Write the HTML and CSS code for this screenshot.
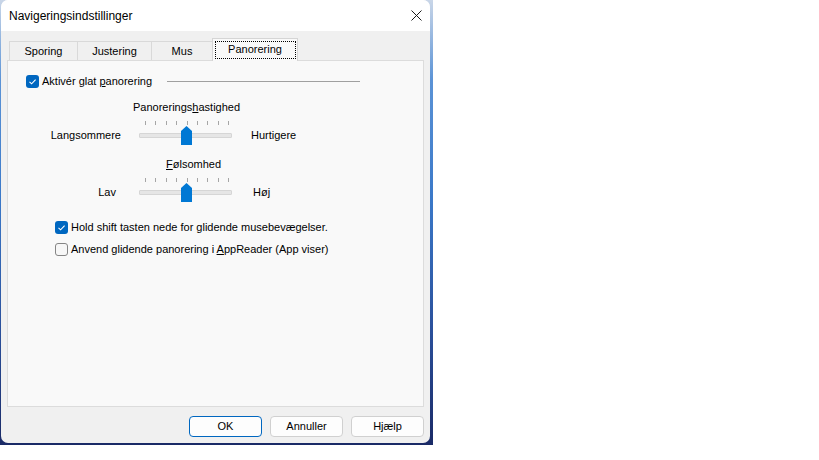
FILE: index.html
```html
<!DOCTYPE html>
<html>
<head>
<meta charset="utf-8">
<link rel="stylesheet" href="styles.css">
</head>
<body>
<div class="desktop">
  <div class="dialog">
    <div class="titlebar">
      <span class="title">Navigeringsindstillinger</span>
      <svg class="close" width="11" height="11" viewBox="0 0 11 11"><path d="M0.5 0.5 L10.5 10.5 M10.5 0.5 L0.5 10.5" stroke="#1b1b1b" stroke-width="1" fill="none"/></svg>
    </div>
    <div class="body">
      <div class="tabs">
        <div class="tab t1">Sporing</div>
        <div class="tab t2">Justering</div>
        <div class="tab t3">Mus</div>
        <div class="tab t4 active"><span class="focus">Panorering</span></div>
      </div>
      <div class="panel">
        <div class="grouphead">
          <span class="cb checked"><svg width="13" height="13" viewBox="0 0 13 13"><path d="M3.5 6.8 L5.6 8.8 L9.6 4.6" stroke="#fff" stroke-width="1.1" fill="none"/></svg></span>
          <span class="lbl">Aktivér glat <u>p</u>anorering</span>
          <span class="gline"></span>
        </div>

        <div class="stitle st1">Panorerings<u>h</u>astighed</div>
        <div class="ticks"><i></i><i></i><i></i><i></i><i></i><i></i><i></i><i></i><i></i></div>
        <div class="srow">
          <div class="lft">Langsommere</div>
          <div class="track"><svg class="thumb" width="11" height="19" viewBox="0 0 11 19"><path d="M0 5 L5.5 0 L11 5 L11 19 L0 19 Z" fill="#0078d4"/></svg></div>
          <div class="rgt">Hurtigere</div>
        </div>

        <div class="stitle st2"><u>F</u>ølsomhed</div>
        <div class="ticks"><i></i><i></i><i></i><i></i><i></i><i></i><i></i><i></i><i></i></div>
        <div class="srow srow2">
          <div class="lft">Lav</div>
          <div class="track"><svg class="thumb" width="11" height="19" viewBox="0 0 11 19"><path d="M0 5 L5.5 0 L11 5 L11 19 L0 19 Z" fill="#0078d4"/></svg></div>
          <div class="rgt">Høj</div>
        </div>

        <div class="cbrow cbrow1">
          <span class="cb checked"><svg width="13" height="13" viewBox="0 0 13 13"><path d="M3.5 6.8 L5.6 8.8 L9.6 4.6" stroke="#fff" stroke-width="1.1" fill="none"/></svg></span>
          <span class="lbl">Hold shift tasten nede for glidende musebevægelser.</span>
        </div>
        <div class="cbrow cbrow2">
          <span class="cb"></span>
          <span class="lbl">Anvend glidende panorering i <u>A</u>ppReader (App viser)</span>
        </div>
      </div>
      <div class="buttons">
        <div class="btn default">OK</div>
        <div class="btn">Annuller</div>
        <div class="btn">Hjælp</div>
      </div>
    </div>
  </div>
</div>
</body>
</html>
```
FILE: styles.css
```css
html, body {
  margin: 0;
  padding: 0;
  background: #ffffff;
}
body {
  font-family: "Liberation Sans", Arial, sans-serif;
  font-size: 11px;
  color: #000;
}
.desktop {
  width: 433px;
  height: 445px;
  background: linear-gradient(180deg, #c9d6e8 0%, #5b93d6 18%, #3a78c8 45%, #2a4f9a 75%, #1a2a66 100%);
}
.dialog {
  margin-left: 1px;
  width: 429px;
  height: 443px;
  border-radius: 7px;
  overflow: hidden;
  background: #f0f0f0;
  display: flex;
  flex-direction: column;
}
.titlebar {
  height: 31px;
  background: #ffffff;
  display: flex;
  align-items: center;
  justify-content: space-between;
  padding: 0 8px 0 8px;
  flex-shrink: 0;
}
.title {
  font-size: 12px;
  margin-top: 1px;
  color: #000;
}
.close {
  margin-right: 0px;
  margin-top: 0px;
}
.body {
  padding: 7px 6px 0 6px;
  display: flex;
  flex-direction: column;
}
.tabs {
  display: flex;
  align-items: flex-end;
  height: 23px;
  margin-left: 2px;
  margin-bottom: -1px;
  position: relative;
  z-index: 1;
}
.tab {
  box-sizing: border-box;
  height: 19px;
  margin-bottom: 1px;
  border: 1px solid #d9d9d9;
  border-bottom: none;
  background: #f0f0f0;
  display: flex;
  align-items: center;
  justify-content: center;
  line-height: 13px;
  padding-top: 1px;
}
.t1 { width: 69px; }
.t2 { width: 75px; margin-left: -1px; }
.t3 { width: 62px; margin-left: -1px; }
.t4 { width: 86px; margin-left: -1px; }
.tab.active {
  height: 23px;
  margin-bottom: 0;
  background: #f9f9f9;
  padding: 2px 1px 0 1px;
  align-items: flex-start;
  border-color: #d5d5d5;
}
.focus {
  box-sizing: border-box;
  width: 81px;
  height: 18px;
  border: 1px dotted #000;
  display: flex;
  align-items: center;
  justify-content: center;
  padding-bottom: 1px;
}
.panel {
  box-sizing: border-box;
  height: 347px;
  border: 1px solid #dcdcdc;
  background: #f9f9f9;
  padding-top: 14px;
}
.cb {
  box-sizing: border-box;
  width: 13px;
  height: 13px;
  border-radius: 3px;
  border: 1px solid #858585;
  background: #f7f7f7;
  flex-shrink: 0;
  display: block;
}
.cb.checked {
  border: none;
  background: #0067c0;
}
.cb svg { display: block; }
.lbl {
  line-height: 13px;
  white-space: nowrap;
}
.grouphead {
  display: flex;
  align-items: center;
  height: 13px;
  margin-left: 18px;
}
.grouphead .lbl { margin-left: 3px; }
.gline {
  width: 193px;
  height: 1px;
  background: #a0a0a0;
  margin-left: 15px;
}
.stitle {
  line-height: 13px;
  white-space: nowrap;
}
.st1 {
  margin-top: 13px;
  margin-left: 125px;
}
.st2 {
  margin-top: 13px;
  margin-left: 158px;
}
.ticks {
  margin-top: 7px;
  margin-left: 137px;
  width: 84px;
  height: 4px;
  display: flex;
  justify-content: space-between;
}
.ticks i {
  display: block;
  width: 1px;
  height: 4px;
  background: #a6a6a6;
}
.srow {
  display: flex;
  align-items: center;
  height: 19px;
  margin-top: 1px;
}
.lft {
  width: 113px;
  text-align: right;
  line-height: 13px;
  white-space: nowrap;
  box-sizing: border-box;
}
.srow2 .lft { padding-right: 5px; }
.track {
  position: relative;
  box-sizing: border-box;
  width: 93px;
  height: 5px;
  margin-left: 18px;
  background: #e6e6e6;
  border: 1px solid #d6d6d6;
  border-radius: 1px;
}
.thumb {
  position: absolute;
  left: 41px;
  top: -8px;
  display: block;
}
.rgt {
  margin-left: 19px;
  line-height: 13px;
  white-space: nowrap;
}
.srow2 .rgt { margin-left: 21px; }
.cbrow {
  display: flex;
  align-items: center;
  height: 13px;
  margin-left: 47px;
}
.cbrow .lbl { margin-left: 3px; }
.cbrow1 { margin-top: 19px; }
.cbrow2 { margin-top: 9px; }
.buttons {
  display: flex;
  justify-content: flex-end;
  gap: 8px;
  margin-top: 9px;
}
.btn {
  box-sizing: border-box;
  width: 73px;
  height: 21px;
  border: 1px solid #d0d0d0;
  border-radius: 4px;
  background: #fdfdfd;
  display: flex;
  align-items: center;
  justify-content: center;
  line-height: 13px;
}
.btn.default {
  border-color: #0067c0;
}
```
